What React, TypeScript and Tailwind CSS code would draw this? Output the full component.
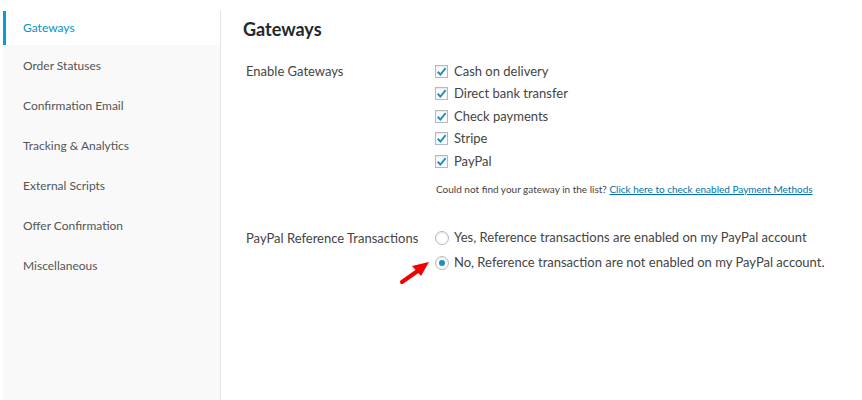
const items = [
  "Gateways",
  "Order Statuses",
  "Confirmation Email",
  "Tracking & Analytics",
  "External Scripts",
  "Offer Confirmation",
  "Miscellaneous",
];

const gateways = ["Cash on delivery", "Direct bank transfer", "Check payments", "Stripe", "PayPal"];

const Check = () => (
  <span className="flex h-[13px] w-[13px] shrink-0 items-center justify-center border border-[#b4b9be] bg-white shadow-[inset_0_1px_2px_rgba(0,0,0,0.1)]">
    <svg width="11" height="11" viewBox="0 0 20 20">
      <path d="M3 10.5 L8 15.5 L17.5 4" fill="none" stroke="#1e8cbe" strokeWidth="3.4" />
    </svg>
  </span>
);

const Radio = ({ on }: { on?: boolean }) => (
  <span className="flex h-[14px] w-[14px] shrink-0 items-center justify-center rounded-full border border-[#b4b9be] bg-white shadow-[inset_0_1px_2px_rgba(0,0,0,0.1)]">
    {on && <span className="h-[6px] w-[6px] rounded-full bg-[#1e8cbe]" />}
  </span>
);

const App = () => {
  return (
    <main className="flex h-[400px] w-[862px] bg-white font-['Lato',sans-serif] text-[#444]">
      <aside className="ml-[3px] mt-[11px] flex w-[218px] flex-col border-r border-[#e5e5e5] bg-[#f9f9f9]">
        {items.map((it, i) => (
          <div
            key={it}
            className={
              i === 0
                ? "flex h-[34px] items-center border-l-[3px] border-[#00a0d2] bg-white pl-[17px] text-[12px] text-[#0096c7]"
                : "flex h-[40px] items-center pl-[20px] pt-[2px] text-[12px] text-[#555]"
            }
          >
            {it}
          </div>
        ))}
      </aside>
      <section className="flex-1 pl-[22px] pt-[17px]">
        <h1 className="text-[18px] font-bold leading-[24px] text-[#23282d]">Gateways</h1>
        <div className="mt-[19px] flex">
          <div className="w-[192px] pl-[3px] text-[13px] leading-[22px]">Enable Gateways</div>
          <div className="flex flex-col">
            {gateways.map((g) => (
              <label key={g} className="flex h-[22.5px] items-center gap-[6px] text-[13px]">
                <Check />
                {g}
              </label>
            ))}
            <p className="mt-[9px] pl-[1px] text-[10px] text-[#444]">
              Could not find your gateway in the list?{" "}
              <a className="text-[#0073aa] underline">Click here to check enabled Payment Methods</a>
            </p>
          </div>
        </div>
        <div className="mt-[30px] flex">
          <div className="w-[192px] pl-[3px] text-[13px] leading-[22px]">PayPal Reference Transactions</div>
          <div className="flex flex-col gap-[3px]">
            <label className="flex h-[22px] items-center gap-[5px] text-[13px]">
              <Radio />
              Yes, Reference transactions are enabled on my PayPal account
            </label>
            <label className="relative flex h-[22px] items-center gap-[5px] text-[13px]">
              <svg className="absolute left-[-36px] top-[8px]" width="34" height="26" viewBox="0 0 34 26">
                <path d="M3 22 L20 10" stroke="#f20000" strokeWidth="4" strokeLinecap="round" />
                <path d="M30 2 L13 6 L22 16 Z" fill="#f20000" />
              </svg>
              <Radio on />
              No, Reference transaction are not enabled on my PayPal account.
            </label>
          </div>
        </div>
      </section>
    </main>
  );
};

export default App;
